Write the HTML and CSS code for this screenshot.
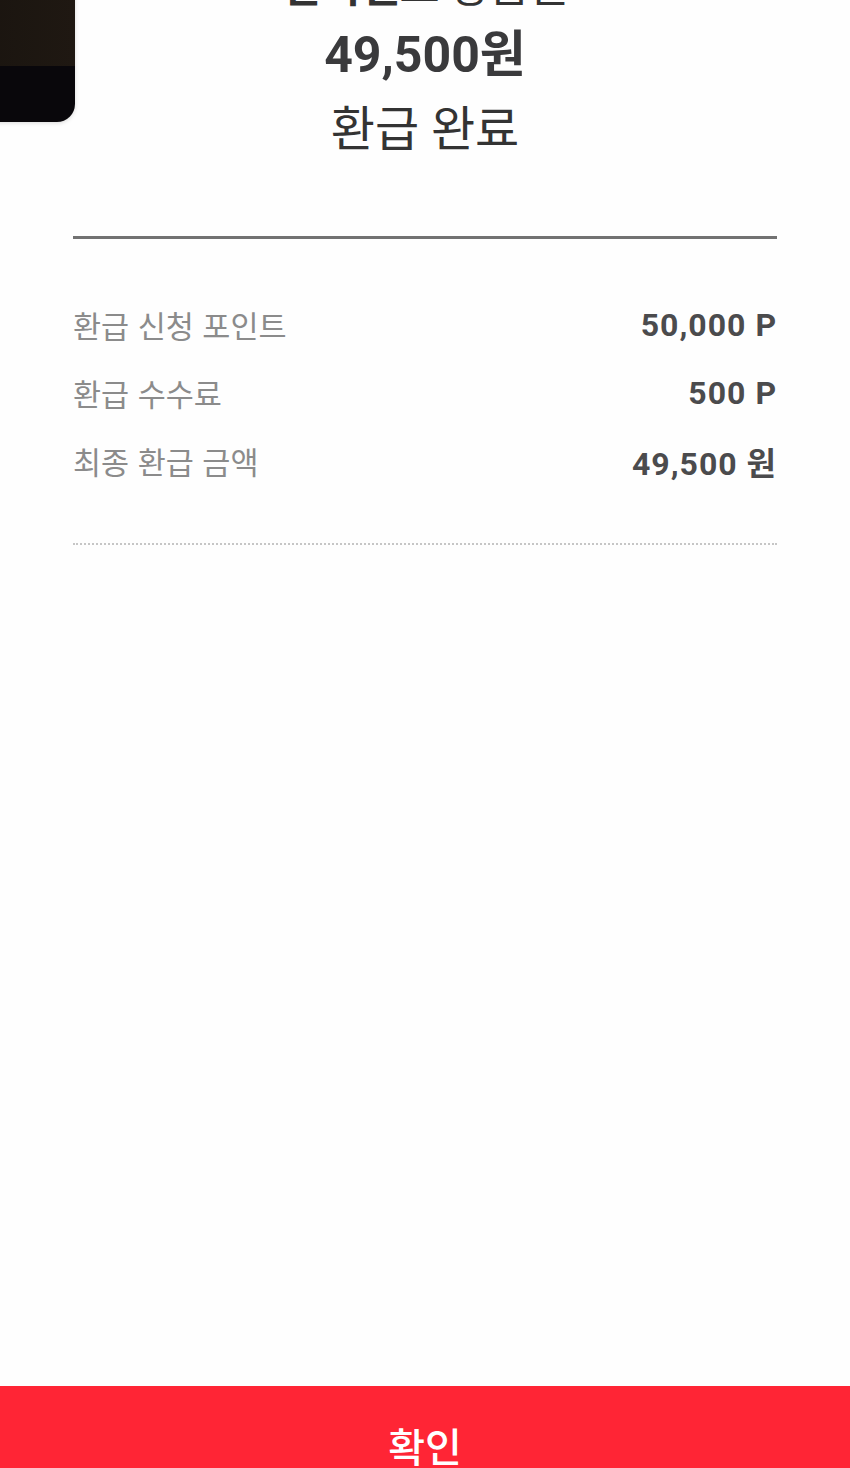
FILE: index.html
```html
<!DOCTYPE html>
<html lang="ko">
<head>
    <meta charset="UTF-8">
    <meta name="viewport" content="width=device-width, initial-scale=1.0">
    <title>환급 완료</title>
    <link rel="stylesheet" href="styles.css">
</head>
<body>
    <div class="page">
        <div class="card-thumb">
            <div class="card-top"></div>
            <div class="card-bottom"></div>
        </div>

        <div class="summary">
            <div class="product"><b>컬쳐랜드</b> 상품권</div>
            <div class="amount">49,500원</div>
            <div class="status">환급 완료</div>
        </div>

        <div class="details">
            <div class="row">
                <span class="label">환급 신청 포인트</span>
                <span class="value">50,000 P</span>
            </div>
            <div class="row">
                <span class="label">환급 수수료</span>
                <span class="value">500 P</span>
            </div>
            <div class="row">
                <span class="label">최종 환급 금액</span>
                <span class="value">49,500 원</span>
            </div>
        </div>

        <button class="confirm">확인</button>
    </div>
</body>
</html>
```

FILE: styles.css
```css
body {
    margin: 0;
    height: 1468px;
    overflow: hidden;
    background: #fefefe;
    font-family: Roboto, "Noto Sans CJK KR", sans-serif;
}
.page {
    position: relative;
    height: 1503px;
    display: flex;
    flex-direction: column;
}
/* thumbnail of the card, mostly scrolled out of view */
.card-thumb {
    position: absolute;
    left: -40px;
    top: -60px;
    width: 115px;
    height: 182px;
    border-bottom-right-radius: 18px;
    overflow: hidden;
    box-shadow: 0 1px 4px rgba(0, 0, 0, 0.15);
    display: flex;
    flex-direction: column;
}
.card-top {
    height: 126px;
    background: linear-gradient(90deg, #19140f, #1f1812);
}
.card-bottom {
    flex: 1;
    background: #09070b;
}
.summary {
    margin-top: -46px;
    text-align: center;
}
.product {
    font-size: 43px;
    line-height: 66px;
    color: #333;
}
.amount {
    font-size: 50px;
    line-height: 70px;
    font-weight: bold;
    color: #3a3a3c;
}
.status {
    margin-top: 10px;
    font-size: 48px;
    line-height: 60px;
    color: #333;
}
.details {
    margin: 76px 73px 0;
    border-top: 3px solid #727272;
    border-bottom: 2px dotted #c6c6c6;
    padding: 66px 0 62px;
    display: flex;
    flex-direction: column;
    gap: 28px;
}
.row {
    display: flex;
    justify-content: space-between;
    align-items: center;
    height: 40px;
}
.label {
    font-family: "Noto Sans CJK KR", sans-serif;
    font-size: 30.5px;
    color: #8b8b8b;
}
.value {
    font-size: 32px;
    font-weight: bold;
    color: #4b4b4d;
    letter-spacing: 1px;
}
.confirm {
    margin-top: auto;
    height: 117px;
    border: none;
    background: #ff2535;
    color: #fff;
    font-family: "Noto Sans CJK KR", sans-serif;
    font-size: 40px;
    font-weight: 500;
    padding: 0;
}
```
